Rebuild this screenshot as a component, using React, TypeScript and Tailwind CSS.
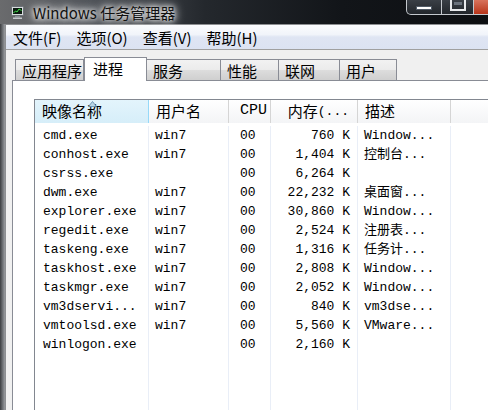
import React from 'react'

const ui = { fontFamily: '"Noto Sans CJK SC", "Liberation Sans", sans-serif' }
const mono = { fontFamily: '"Liberation Mono", "Noto Sans CJK SC", monospace' }

const rows = [
  { name: 'cmd.exe', user: 'win7', mem: '760 K', desc: 'Window...' },
  { name: 'conhost.exe', user: 'win7', mem: '1,404 K', desc: '控制台...' },
  { name: 'csrss.exe', user: '', mem: '6,264 K', desc: '' },
  { name: 'dwm.exe', user: 'win7', mem: '22,232 K', desc: '桌面窗...' },
  { name: 'explorer.exe', user: 'win7', mem: '30,860 K', desc: 'Window...' },
  { name: 'regedit.exe', user: 'win7', mem: '2,524 K', desc: '注册表...' },
  { name: 'taskeng.exe', user: 'win7', mem: '1,316 K', desc: '任务计...' },
  { name: 'taskhost.exe', user: 'win7', mem: '2,808 K', desc: 'Window...' },
  { name: 'taskmgr.exe', user: 'win7', mem: '2,052 K', desc: 'Window...' },
  { name: 'vm3dservi...', user: 'win7', mem: '840 K', desc: 'vm3dse...' },
  { name: 'vmtoolsd.exe', user: 'win7', mem: '5,560 K', desc: 'VMware...' },
  { name: 'winlogon.exe', user: '', mem: '2,160 K', desc: '' },
]

const tabs = [
  { label: '应用程序', w: 'w-[69px]' },
  { label: '进程', w: 'w-[63px]', active: true },
  { label: '服务', w: 'w-[75px]' },
  { label: '性能', w: 'w-[59px]' },
  { label: '联网', w: 'w-[62px]' },
  { label: '用户', w: 'w-[58px]' },
]

function AppIcon() {
  return (
    <svg width="13" height="13" viewBox="0 0 13 13">
      <rect x="0.5" y="0.5" width="12" height="9" rx="1" fill="#d8dcdf" stroke="#6a7075" />
      <rect x="2" y="2" width="9" height="6" fill="#0c1a10" />
      <polyline points="2.5,7 4.5,5 6,6 8,3 10.5,4.5" fill="none" stroke="#3ee04a" strokeWidth="1" />
      <rect x="4" y="10" width="5" height="1.5" fill="#8a9096" />
      <rect x="2" y="11.5" width="9" height="1.5" fill="#c2c6ca" />
    </svg>
  )
}

function TitleBar() {
  return (
    <div className="relative h-[24px] bg-[linear-gradient(to_right,#6a6b6d_0%,#50545a_18%,#24282d_42%,#121519_70%,#0d0f12_100%)] flex items-center">
      <div className="ml-[11px] mt-[1px]">
        <AppIcon />
      </div>
      <div
        className="ml-[9px] text-[15px] leading-none text-[#111] [text-shadow:0_0_8px_#fff,0_0_12px_#fff,0_0_4px_#eee]"
        style={ui}
      >
        Windows 任务管理器
      </div>
      <div className="absolute right-0 top-0 flex h-[15px]">
        <div className="w-[36px] h-full rounded-bl-[5px] border border-t-0 border-[#c4c8cd] bg-[linear-gradient(#3a3f46,#22262b)] flex items-center justify-center">
          <div className="w-[16px] h-[4px] bg-white border border-[#505a66] mt-[2px]" />
        </div>
        <div className="w-[32px] h-full border-b border-r border-[#c4c8cd] bg-[linear-gradient(#3a3f46,#22262b)] flex justify-center">
          <div className="w-[16px] h-[11px] border-[2px] border-t-0 border-[#e8eaec] flex justify-center">
            <div className="w-[8px] h-[3px] mt-[2px] bg-[#6a727c]" />
          </div>
        </div>
        <div className="w-[14px] h-full border-b border-[#c4c8cd] bg-[linear-gradient(#d8735c,#b8351a)]" />
      </div>
    </div>
  )
}

function MenuBar() {
  return (
    <div
      className="h-[25px] border-b border-[#a0a0a0] bg-[linear-gradient(#fbfcfe_0%,#f1f4fa_40%,#dfe5f3_50%,#dce3f2_100%)] flex items-center pl-[7px] gap-[15px] text-[15px] text-black"
      style={ui}
    >
      <span className="mt-[2px]">文件(F)</span>
      <span className="mt-[2px]">选项(O)</span>
      <span className="mt-[2px]">查看(V)</span>
      <span className="mt-[2px]">帮助(H)</span>
    </div>
  )
}

function Tabs() {
  return (
    <div className="flex items-end h-[23px] pl-[3px] relative z-10" style={ui}>
      {tabs.map((t) =>
        t.active ? (
          <div
            key={t.label}
            className={`${t.w} h-[24px] -mb-px bg-white border border-b-0 border-[#898c95] pl-[8px] pt-[1px] text-[15px] leading-[20px] text-black`}
          >
            {t.label}
          </div>
        ) : (
          <div
            key={t.label}
            className={`${t.w} h-[21px] -ml-px first:ml-0 border border-b-0 border-[#898c95] bg-[linear-gradient(#f2f2f2_0%,#ebebeb_50%,#dddddd_51%,#cfcfcf_100%)] pl-[6px] pt-[1px] text-[15px] leading-[20px] text-black`}
          >
            {t.label}
          </div>
        )
      )}
    </div>
  )
}

function ListView() {
  const hdr = 'h-[23px] flex items-center border-r bg-[linear-gradient(#ffffff,#f3f4f6)] border-[#d5d5d5] text-[15px] text-black'
  return (
    <div className="ml-[21px] mt-[18px] border-l border-t border-[#828790] bg-white flex-1 flex flex-col overflow-hidden">
      <div className="flex h-[23px] border-b border-[#e5e5e5]">
        <div className="relative w-[114px] h-[23px] flex items-center pl-[7px] border-r border-[#96d9f9] bg-[linear-gradient(#e3f4fc,#d6eef9)] text-[15px] text-black" style={ui}>
          映像名称
          <svg className="absolute left-[53px] top-[1px]" width="9" height="6" viewBox="0 0 9 6">
            <polygon points="4.5,0.5 8.5,5.5 0.5,5.5" fill="#b9d5e6" stroke="#5b88a8" strokeWidth="0.8" />
          </svg>
        </div>
        <div className={`w-[80px] pl-[7px] ${hdr}`} style={ui}>用户名</div>
        <div className={`w-[42px] pl-[11px] ${hdr} text-[13px]`} style={mono}>CPU</div>
        <div className={`w-[87px] pr-[8px] justify-end ${hdr}`} style={ui}>
          内存<span className="text-[13px]" style={mono}>(...</span>
        </div>
        <div className={`w-[93px] pl-[7px] ${hdr}`} style={ui}>描述</div>
        <div className="flex-1 h-[23px] bg-[linear-gradient(#ffffff,#f3f4f6)]" />
      </div>
      <div className="flex flex-1 pt-[3px] text-[13px] text-black" style={mono}>
        <div className="w-[114px] border-r border-[#e9eef7]">
          {rows.map((r) => (
            <div key={r.name} className="h-[19px] leading-[19px] pl-[8px] whitespace-pre">{r.name}</div>
          ))}
        </div>
        <div className="w-[80px] border-r border-[#e9eef7]">
          {rows.map((r) => (
            <div key={r.name} className="h-[19px] leading-[19px] pl-[6px]">{r.user}</div>
          ))}
        </div>
        <div className="w-[42px] border-r border-[#e9eef7]">
          {rows.map((r) => (
            <div key={r.name} className="h-[19px] leading-[19px] pl-[11px]">00</div>
          ))}
        </div>
        <div className="w-[87px] border-r border-[#e9eef7]">
          {rows.map((r) => (
            <div key={r.name} className="h-[19px] leading-[19px] pr-[7px] text-right">{r.mem}</div>
          ))}
        </div>
        <div className="w-[93px] border-r border-[#e9eef7]">
          {rows.map((r) => (
            <div key={r.name} className="h-[19px] leading-[19px] pl-[6px] whitespace-pre">
              {r.desc}
            </div>
          ))}
        </div>
        <div className="flex-1" />
      </div>
    </div>
  )
}

export default function App() {
  return (
    <div className="w-[488px] h-[410px] overflow-hidden flex flex-col bg-[#0d0f12]">
      <TitleBar />
      <div className="flex flex-1 min-h-0">
        <div className="w-[5px] bg-[linear-gradient(to_right,#3b3d40,#6b6e72,#9a9ca0)]" />
        <div className="flex-1 flex flex-col border-l border-t border-[#8d8f92] bg-[#f0f0f0] min-w-0">
          <MenuBar />
          <div className="pl-[6px] pt-[7px] flex-1 flex flex-col min-h-0">
            <Tabs />
            <div className="flex-1 flex flex-col border-l border-t border-[#898c95] bg-white min-h-0">
              <ListView />
            </div>
          </div>
        </div>
      </div>
    </div>
  )
}
